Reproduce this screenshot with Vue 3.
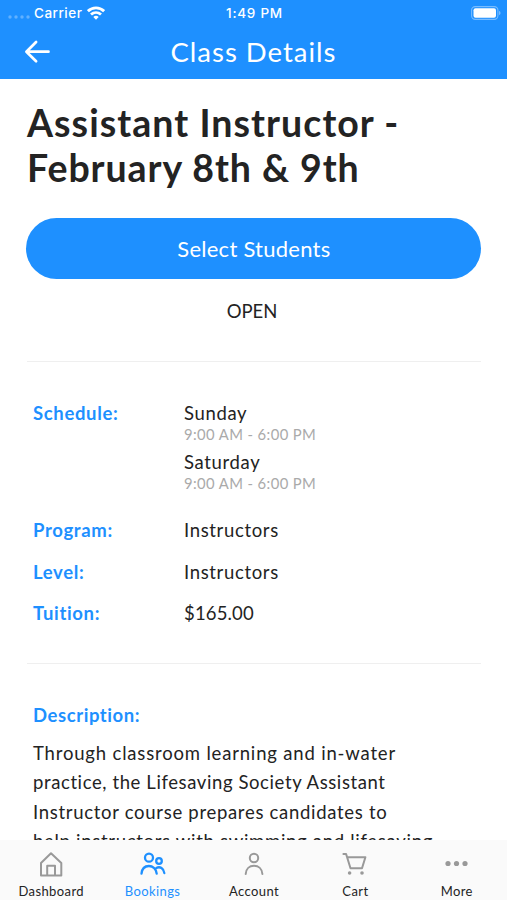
<script setup>
const schedule = [
  { day: 'Sunday', time: '9:00 AM - 6:00 PM' },
  { day: 'Saturday', time: '9:00 AM - 6:00 PM' },
]
const facts = [
  { label: 'Program:', value: 'Instructors', kind: 'program' },
  { label: 'Level:', value: 'Instructors', kind: 'level' },
  { label: 'Tuition:', value: '$165.00', kind: 'tuition' },
]
const description = [
  'Through classroom learning and in-water',
  'practice, the Lifesaving Society Assistant',
  'Instructor course prepares candidates to',
  'help instructors with swimming and lifesaving',
]
const tabs = ['Dashboard', 'Bookings', 'Account', 'Cart', 'More']
</script>

<template>
  <div class="screen">
    <header class="header">
      <div class="status">
        <div class="carrier">
          <svg class="signal" width="22" height="6" viewBox="0 0 22 6" fill="#fff" fill-opacity=".3">
            <circle cx="2" cy="3" r="1.7" /><circle cx="8" cy="3" r="1.7" /><circle cx="14" cy="3" r="1.7" /><circle cx="20" cy="3" r="1.7" />
          </svg>
          <span>Carrier</span>
          <svg class="wifi" width="18" height="14" viewBox="0 0 18 14" fill="none" stroke="#fff" stroke-width="2.8">
            <path d="M.9 5.2C5.5.7 12.500.7 17.100 5.200" />
            <path d="M4 8.600C6.900 5.900 11.100 5.900 14 8.600" />
            <path d="M9 13.700L6.300 10.900Q9 8.700 11.700 10.900Z" fill="#fff" stroke="none" />
          </svg>
        </div>
        <span class="clock">1:49 PM</span>
        <svg class="battery" width="30" height="14" viewBox="0 0 30 14">
          <rect x=".6" y=".6" width="26.300" height="12.800" rx="3.600" fill="none" stroke="#fff" stroke-opacity=".4" stroke-width="1.100" />
          <rect x="2.500" y="2.300" width="22.500" height="9.400" rx="2" fill="#fff" />
          <path d="M28 4.800Q29.600 5.500 29.600 7T28 9.200Z" fill="#fff" fill-opacity=".4" />
        </svg>
      </div>
      <div class="nav">
        <svg class="back" width="26" height="24" viewBox="0 0 26 24" fill="none" stroke="#fff" stroke-width="2.700" stroke-linecap="round" stroke-linejoin="round">
          <path d="M12.100 2L2.400 11.700L12.100 21.300M2.600 11.700H24.500" />
        </svg>
        <h2>Class Details</h2>
        <i></i>
      </div>
    </header>

    <main class="content">
      <h1>Assistant Instructor -<br /><span class="dates">February 8th &amp; 9th</span></h1>
      <button class="select">Select Students</button>
      <p class="state">OPEN</p>

      <section class="facts">
        <div class="row schedule">
          <span class="label">Schedule:</span>
          <div>
            <div v-for="s in schedule" :key="s.day" class="slot">
              <div class="day">{{ s.day }}</div>
              <div class="time">{{ s.time }}</div>
            </div>
          </div>
        </div>
        <div v-for="f in facts" :key="f.label" class="row">
          <span class="label">{{ f.label }}</span>
          <span class="value" :class="f.kind">{{ f.value }}</span>
        </div>
      </section>

      <section class="description">
        <div class="label">Description:</div>
        <p><span v-for="(line, i) in description" :key="i" class="line" :class="'l' + i">{{ line }}</span></p>
      </section>
    </main>

    <nav class="tabs">
      <a v-for="t in tabs" :key="t" class="tab" :class="{ active: t === 'Bookings' }">
        <svg width="28" height="28" viewBox="0 0 28 28" fill="none" stroke="currentColor" stroke-width="2" stroke-linecap="round" stroke-linejoin="round">
          <template v-if="t === 'Dashboard'">
            <path d="M4 13L14 3.200L24.300 13V25.500H4ZM10.200 25V15.800H18V25" />
          </template>
          <template v-else-if="t === 'Bookings'">
            <g stroke-width="2.300">
              <circle cx="10" cy="7.700" r="4" /><circle cx="20" cy="11" r="2.800" />
              <path d="M2.500 23.700C3 18.400 6.300 16 9.900 16S17 18.400 17.700 23.700M17.300 18C21 16 24.800 18.300 25.300 23" />
            </g>
          </template>
          <template v-else-if="t === 'Account'">
            <circle cx="14" cy="8" r="4.200" />
            <path d="M5.700 24C6 18.700 9.500 15.800 14 15.800S22 18.700 22.400 24" />
          </template>
          <template v-else-if="t === 'Cart'">
            <path d="M2.400 4H5.100L9.500 18.300H21L24.400 7.200H6.800" />
            <g fill="currentColor" stroke="none"><circle cx="8.600" cy="23" r="1.800" /><circle cx="21" cy="23" r="1.800" /></g>
          </template>
          <g v-else fill="currentColor" stroke="none"><circle cx="5" cy="13.500" r="2.600" /><circle cx="13.500" cy="13.500" r="2.600" /><circle cx="22" cy="13.500" r="2.600" /></g>
        </svg>
        <span>{{ t }}</span>
      </a>
    </nav>
  </div>
</template>

<style>
body { margin: 0; background: #fff; }
</style>

<style scoped>
* { box-sizing: border-box; }
.screen { width: 507px; height: 900px; display: flex; flex-direction: column; overflow: hidden; background: #fff; color: #232323; font-family: Lato, "Noto Sans", sans-serif; }
.header { flex: none; height: 79px; background: #1e90ff; color: #fff; }
.status { height: 26px; display: grid; grid-template-columns: 1fr auto 1fr; align-items: center; padding: 0 6px 0 8px; font: 500 13.500px/26px Inter, sans-serif; letter-spacing: .5px; }
.carrier { display: flex; align-items: center; }
.signal { margin: 7px 4px 0 0; }
.wifi { margin-left: 5px; }
.clock { letter-spacing: .75px; }
.battery { justify-self: end; }
.nav { display: grid; grid-template-columns: 26px 1fr 26px; align-items: center; height: 52px; padding: 0 24px; }
h2 { margin: 0; text-align: center; font-size: 27.500px; line-height: 52px; font-weight: 400; letter-spacing: 1px; }
.content { flex: 1; min-height: 0; overflow: hidden; padding: 21px 26px 0 27px; }
h1 { margin: 0; font-size: 37.500px; line-height: 45px; font-weight: 700; letter-spacing: 1.050px; white-space: nowrap; }
.dates { letter-spacing: .920px; }
.select { display: block; width: 455px; height: 61px; margin: 28.400px 0 0 -.6px; padding: 0; border: 0; border-radius: 31px; background: #1e90ff; color: #fff; font: 400 22px/61px Lato, sans-serif; letter-spacing: .25px; }
.state { margin: 19.600px 4px 0 0; text-align: center; font-size: 18.500px; line-height: 24px; }
.facts { margin-top: 38px; border-top: 1px solid #efefef; border-bottom: 1px solid #efefef; padding: 39.500px 6px 38px; height: 303px; }
.row { display: grid; grid-template-columns: 151px 1fr; font-size: 18.500px; line-height: 24px; margin-bottom: 17.500px; letter-spacing: .65px; }
.schedule { margin-bottom: 19px; }
.slot { height: 49px; }
.time { font-size: 14.800px; line-height: 18px; color: #aaa; letter-spacing: .4px; }
.tuition { letter-spacing: .15px; }
.label { color: #1e90ff; font-weight: 700; font-size: 18.500px; line-height: 24px; letter-spacing: .65px; }
.description { padding: 39px 6px 0; }
.description .label { letter-spacing: .57px; }
.description p { margin: 12px 0 0; font-size: 18.500px; line-height: 29.300px; white-space: nowrap; }
.line { display: block; letter-spacing: .7px; }
.l0 { letter-spacing: .82px; }
.l1 { letter-spacing: .6px; }
.tabs { flex: none; height: 60px; display: grid; grid-template-columns: repeat(5, 1fr); background: #fafafa; }
.tab { display: flex; flex-direction: column; align-items: center; padding: 10px 0 0 1px; color: #999; }
.tab span { margin-top: 5px; font-size: 13px; line-height: 17px; color: #232323; letter-spacing: .4px; }
.tab.active, .tab.active span { color: #1e90ff; }
</style>
